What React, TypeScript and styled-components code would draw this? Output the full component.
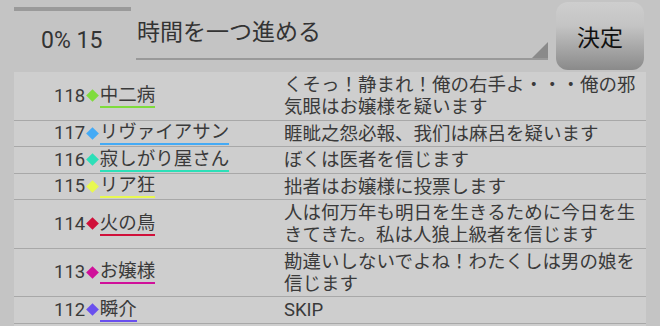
import styled, { createGlobalStyle } from "styled-components";

const GlobalStyle = createGlobalStyle`
  body {
    margin: 0;
    background: #c4c4c4;
    font-family: "Roboto", "Noto Sans CJK JP", sans-serif;
    color: #3a3a3a;
  }
`;

const logs = [
  { no: 118, name: "中二病", color: "#7fdc3c", text: "くそっ！静まれ！俺の右手よ・・・俺の邪気眼はお嬢様を疑います" },
  { no: 117, name: "リヴァイアサン", color: "#44aaf5", text: "睚眦之怨必報、我们は麻呂を疑います" },
  { no: 116, name: "寂しがり屋さん", color: "#2ddfb8", text: "ぼくは医者を信じます" },
  { no: 115, name: "リア狂", color: "#e8f850", text: "拙者はお嬢様に投票します" },
  { no: 114, name: "火の鳥", color: "#d0103a", text: "人は何万年も明日を生きるために今日を生きてきた。私は人狼上級者を信じます" },
  { no: 113, name: "お嬢様", color: "#d0109a", text: "勘違いしないでよね！わたくしは男の娘を信じます" },
  { no: 112, name: "瞬介", color: "#6a50ee", text: "SKIP" },
];

const App = () => {
  return (
    <>
      <GlobalStyle />
      <Header>
        <StatusBox>
          <Progress />
          <StatusText>0% 15</StatusText>
        </StatusBox>
        <ActionField>時間を一つ進める</ActionField>
        <DecideButton>決定</DecideButton>
      </Header>
      <LogTable>
        {logs.map((item) => (
          <LogRow key={item.no}>
            <SpeakerCell>
              <No>{item.no}</No>
              <Diamond color={item.color} />
              <Name color={item.color}>{item.name}</Name>
            </SpeakerCell>
            <MessageCell>{item.text}</MessageCell>
          </LogRow>
        ))}
      </LogTable>
    </>
  );
};

export default App;

const Header = styled.div`
  display: flex;
  height: 72px;
  padding-left: 14px;
`;

const StatusBox = styled.div`
  width: 122px;
  display: flex;
  flex-direction: column;
`;

const Progress = styled.div`
  width: 117px;
  height: 4px;
  margin-top: 7px;
  background: #9a9a9a;
`;

const StatusText = styled.div`
  font-size: 23px;
  line-height: 30px;
  margin-top: 15px;
  padding-left: 27px;
  color: #333;
`;

const ActionField = styled.div`
  position: relative;
  flex: 1;
  height: 60px;
  border-bottom: 2px solid #999;
  font-size: 23px;
  line-height: 30px;
  padding-top: 18px;
  box-sizing: border-box;
  padding-left: 1px;
  color: #333;
  &::after {
    content: "";
    position: absolute;
    right: 0;
    bottom: 0;
    width: 0;
    height: 0;
    border-left: 16px solid transparent;
    border-bottom: 16px solid #8a8a8a;
  }
`;

const DecideButton = styled.div`
  width: 88px;
  height: 68px;
  margin: 2px 16px 0 8px;
  border-radius: 12px;
  background: linear-gradient(#cecece, #c4c4c4 35%, #8a8a8a);
  display: flex;
  align-items: center;
  justify-content: center;
  font-size: 23px;
  color: #111;
`;

const LogTable = styled.div`
  margin: 0 14px;
  background: #cecece;
  padding-bottom: 20px;
`;

const LogRow = styled.div`
  display: grid;
  grid-template-columns: 270px 1fr;
  border-bottom: 1px solid #a8a8a8;
`;

const SpeakerCell = styled.div`
  display: flex;
  align-items: center;
  padding-left: 40px;
  font-size: 18.5px;
`;

const No = styled.span`
  line-height: 22px;
  color: #3a3a3a;
`;

const Diamond = styled.span<{ color: string }>`
  display: inline-block;
  width: 9px;
  height: 9px;
  margin: 0 2.5px 0 3px;
  background: ${(p) => p.color};
  transform: rotate(45deg);
`;

const Name = styled.span<{ color: string }>`
  line-height: 22px;
  border-bottom: 2px solid ${(p) => p.color};
  color: #3a3a3a;
`;

const MessageCell = styled.div`
  font-size: 18.5px;
  line-height: 22px;
  padding: 2px 4px 1.5px 0;
  color: #3a3a3a;
`;
